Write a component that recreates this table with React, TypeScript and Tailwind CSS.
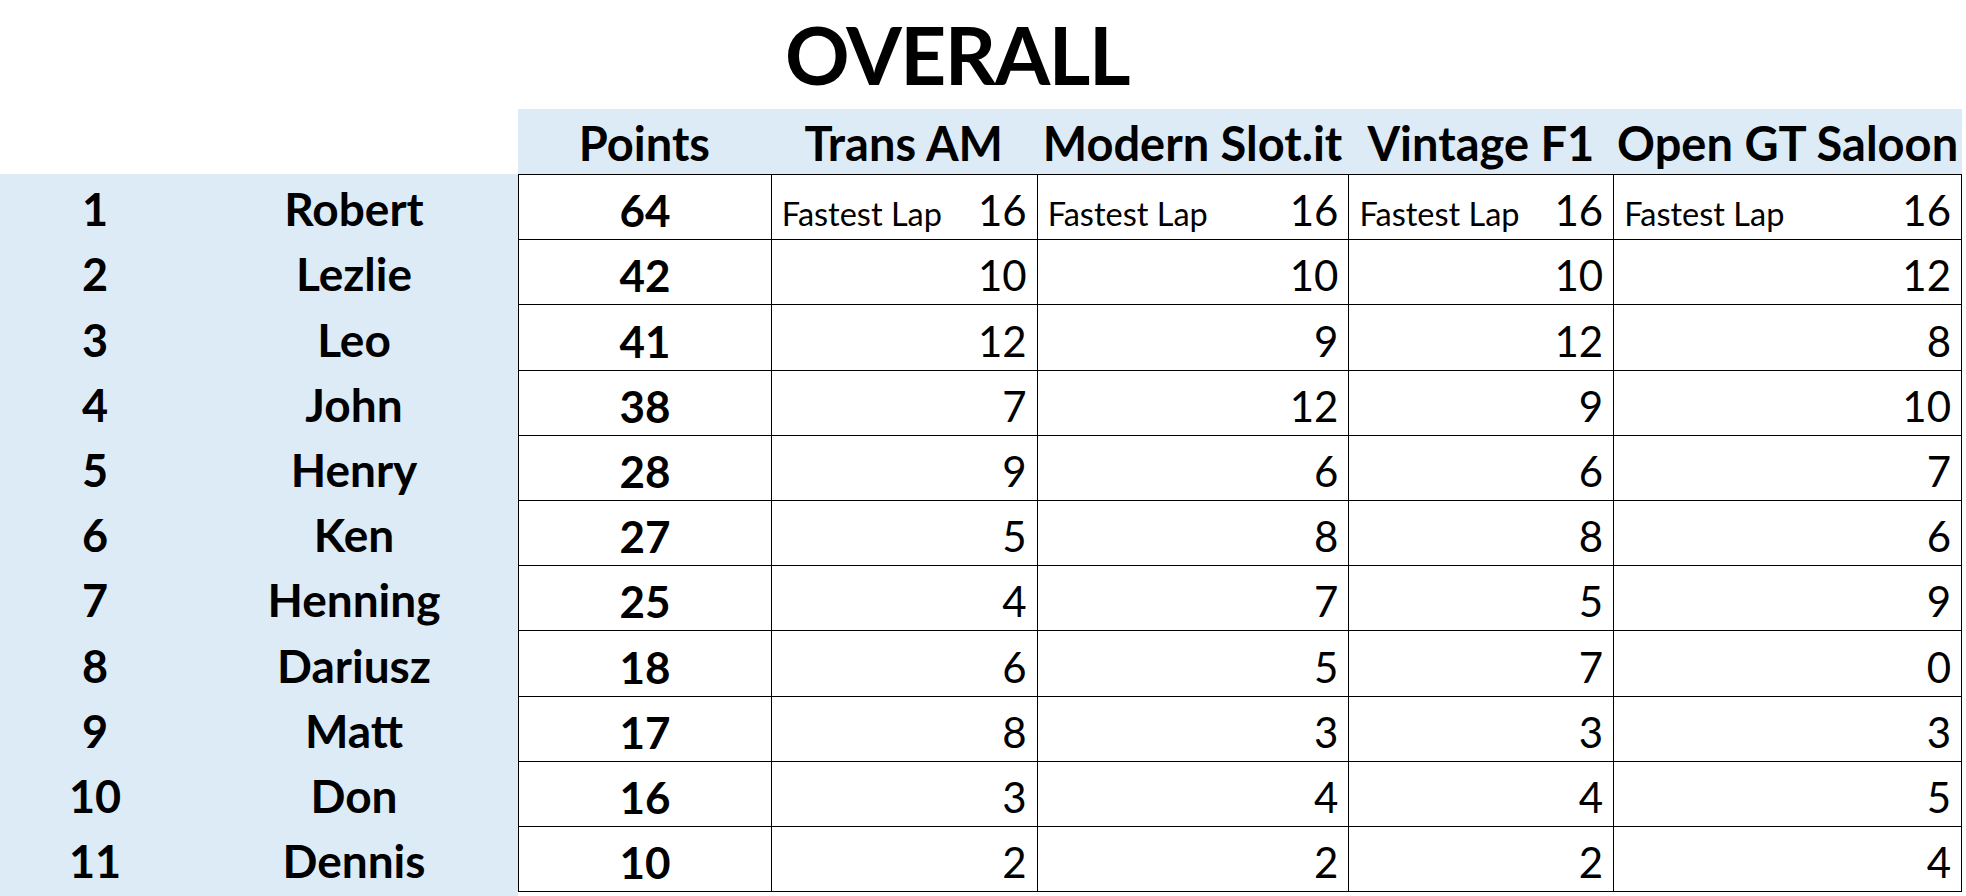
const races = ["Trans AM", "Modern Slot.it", "Vintage F1", "Open GT Saloon"]

const rows = [
  { pos: 1, name: "Robert", pts: 64, scores: [16, 16, 16, 16], fastest: true },
  { pos: 2, name: "Lezlie", pts: 42, scores: [10, 10, 10, 12] },
  { pos: 3, name: "Leo", pts: 41, scores: [12, 9, 12, 8] },
  { pos: 4, name: "John", pts: 38, scores: [7, 12, 9, 10] },
  { pos: 5, name: "Henry", pts: 28, scores: [9, 6, 6, 7] },
  { pos: 6, name: "Ken", pts: 27, scores: [5, 8, 8, 6] },
  { pos: 7, name: "Henning", pts: 25, scores: [4, 7, 5, 9] },
  { pos: 8, name: "Dariusz", pts: 18, scores: [6, 5, 7, 0] },
  { pos: 9, name: "Matt", pts: 17, scores: [8, 3, 3, 3] },
  { pos: 10, name: "Don", pts: 16, scores: [3, 4, 4, 5] },
  { pos: 11, name: "Dennis", pts: 10, scores: [2, 2, 2, 4] },
]

// widths of the four race columns (left border included)
const headCols = ["w-[266px]", "w-[312px]", "w-[265px]", "w-[349px]"]
const raceCols = ["w-[266px]", "w-[312px]", "w-[265px]", "w-[349px] border-r"]

export default function App() {
  return (
    <div className="w-[1966px] h-[896px] bg-white overflow-hidden text-black font-['Lato',sans-serif]">
      {/* Title */}
      <div className="h-[109px] flex items-end pl-[785px] pb-[15px]">
        <h1 className="text-[80px] font-bold leading-none tracking-[-1.5px]">OVERALL</h1>
      </div>

      {/* Header */}
      <div className="flex h-[65px]">
        <div className="w-[518px] shrink-0" />
        <div className="flex bg-[#ddebf7] w-[1444px] shrink-0">
          <div className="w-[253px] flex items-end justify-center pb-[7px]">
            <span className="text-[47px] font-bold leading-none">Points</span>
          </div>
          {races.map((r, i) => (
            <div key={r} className={`flex items-end justify-center pb-[7px] ${headCols[i]}`}>
              <span className="text-[47px] font-bold leading-none whitespace-nowrap">{r}</span>
            </div>
          ))}
        </div>
      </div>

      {/* Body */}
      <div className="flex">
        <div className="w-[518px] shrink-0 bg-[#ddebf7] h-[722px]">
          {rows.map((row) => (
            <div key={row.pos} className="flex h-[65.2px] items-end pb-[7px]">
              <div className="w-[190px] text-center text-[45px] font-bold leading-none">{row.pos}</div>
              <div className="w-[328px] text-center text-[46px] font-bold leading-none">{row.name}</div>
            </div>
          ))}
        </div>
        <div className="w-[1444px] shrink-0 border-t border-black">
          {rows.map((row) => (
            <div key={row.pos} className="flex h-[65.2px] border-b border-black">
              <div className="w-[253px] border-l border-black flex items-end justify-center pb-[7px]">
                <span className="text-[44px] font-bold leading-none">{row.pts}</span>
              </div>
              {row.scores.map((s, i) => (
                <div
                  key={i}
                  className={`${raceCols[i]} border-l border-black flex items-end justify-between px-[10px] pb-[8px]`}
                >
                  <span className="text-[32.5px] leading-none whitespace-nowrap pb-[1px]">
                    {row.fastest ? "Fastest Lap" : ""}
                  </span>
                  <span className="text-[42px] leading-none">{s}</span>
                </div>
              ))}
            </div>
          ))}
        </div>
      </div>
    </div>
  )
}
